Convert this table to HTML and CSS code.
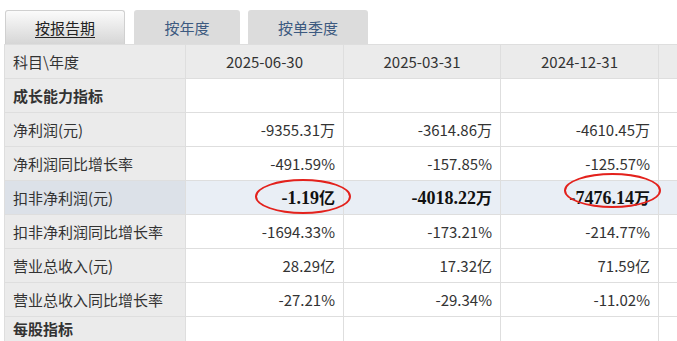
FILE: index.html
```html
<!DOCTYPE html>
<html lang="zh">
<head>
<meta charset="utf-8">
<link rel="stylesheet" href="styles.css">
</head>
<body>
<div class="page">
  <div class="tabs">
    <div class="tab active"><span>按报告期</span></div>
    <div class="tab t2">按年度</div>
    <div class="tab t3">按单季度</div>
  </div>
  <div class="table-wrap">
    <table class="fin">
      <colgroup>
        <col class="c1"><col class="c2"><col class="c3"><col class="c4"><col class="c5">
      </colgroup>
      <tr class="head">
        <td class="name">科目\年度</td><td>2025-06-30</td><td>2025-03-31</td><td>2024-12-31</td><td></td>
      </tr>
      <tr class="section">
        <td class="name">成长能力指标</td><td></td><td></td><td></td><td></td>
      </tr>
      <tr>
        <td class="name">净利润(元)</td><td>-9355.31万</td><td>-3614.86万</td><td>-4610.45万</td><td></td>
      </tr>
      <tr>
        <td class="name">净利润同比增长率</td><td>-491.59%</td><td>-157.85%</td><td>-125.57%</td><td></td>
      </tr>
      <tr class="hl">
        <td class="name">扣非净利润(元)</td>
        <td class="mark"><span class="num">-1.19</span>亿<span class="ring r1"></span></td>
        <td><span class="num">-4018.22</span>万</td>
        <td class="mark"><span class="num">-7476.14</span>万<span class="ring r2"></span></td>
        <td></td>
      </tr>
      <tr>
        <td class="name">扣非净利润同比增长率</td><td>-1694.33%</td><td>-173.21%</td><td>-214.77%</td><td></td>
      </tr>
      <tr>
        <td class="name">营业总收入(元)</td><td>28.29亿</td><td>17.32亿</td><td>71.59亿</td><td></td>
      </tr>
      <tr>
        <td class="name">营业总收入同比增长率</td><td>-27.21%</td><td>-29.34%</td><td>-11.02%</td><td></td>
      </tr>
      <tr class="section last">
        <td class="name">每股指标</td><td></td><td></td><td></td><td></td>
      </tr>
    </table>
  </div>
</div>
</body>
</html>
```

FILE: styles.css
```css
html, body {
  margin: 0;
  padding: 0;
  background: #fff;
  overflow: hidden;
}
.page {
  width: 677px;
  height: 341px;
  overflow: hidden;
  font-family: "Noto Sans CJK SC", "Noto Sans", sans-serif;
  font-size: 15px;
  color: #333;
}
.tabs {
  display: flex;
  align-items: flex-end;
  gap: 9px;
  padding: 10px 0 0 5px;
  height: 44px;
  box-sizing: border-box;
}
.tab {
  height: 34px;
  box-sizing: border-box;
  display: flex;
  align-items: center;
  justify-content: center;
  background: #dcdcdc;
  border-radius: 3px 3px 0 0;
  color: #3d5a80;
  font-size: 15px;
}
.tab.active {
  width: 120px;
  background: linear-gradient(#fbfbfb, #d6d6d6);
  border: 1px solid #d0d0d0;
  border-bottom: none;
  color: #222;
}
.tab.active span {
  text-decoration: underline;
  text-underline-offset: 3px;
}
.tab.t2 { width: 106px; }
.tab.t3 { width: 120px; margin-left: -1px; }
.table-wrap {
  padding-left: 4px;
}
.fin {
  border-collapse: collapse;
  table-layout: fixed;
  width: 760px;
}
.fin col.c1 { width: 181px; }
.fin col.c2 { width: 158px; }
.fin col.c3 { width: 157px; }
.fin col.c4 { width: 158px; }
.fin col.c5 { width: 106px; }
.fin td {
  height: 34px;
  padding: 0 8px 0 8px;
  border: 1px solid #dedede;
  text-align: right;
  white-space: nowrap;
  box-sizing: border-box;
  line-height: 20px;
  vertical-align: middle;
}
.fin td.name {
  text-align: left;
  background: #ebebeb;
  padding-left: 8px;
}
.fin tr.head td {
  background: #ebebeb;
  text-align: center;
}
.fin tr.head td.name { text-align: left; }
.fin tr.section td.name {
  font-weight: bold;
}
.fin tr.last td {
  vertical-align: top;
  padding-top: 3px;
  line-height: 18px;
}
.fin tr.hl td {
  background: #e9eef5;
  font-weight: bold;
  color: #111;
  font-size: 16px;
}
.fin tr.hl td.name {
  background: #dce1e8;
  font-weight: normal;
  color: #333;
  font-size: 15px;
}
.fin tr.hl .num {
  font-family: "Liberation Serif", "Noto Sans CJK SC", serif;
  font-size: 18px;
}
.fin td.mark {
  position: relative;
}
.ring {
  position: absolute;
  border: 2.5px solid #e3211c;
  border-radius: 50%;
  box-sizing: border-box;
  pointer-events: none;
}
.ring.r1 {
  left: 69px;
  top: -2px;
  width: 96px;
  height: 35px;
}
.ring.r2 {
  left: 63px;
  top: -8px;
  width: 97px;
  height: 35px;
}
```
